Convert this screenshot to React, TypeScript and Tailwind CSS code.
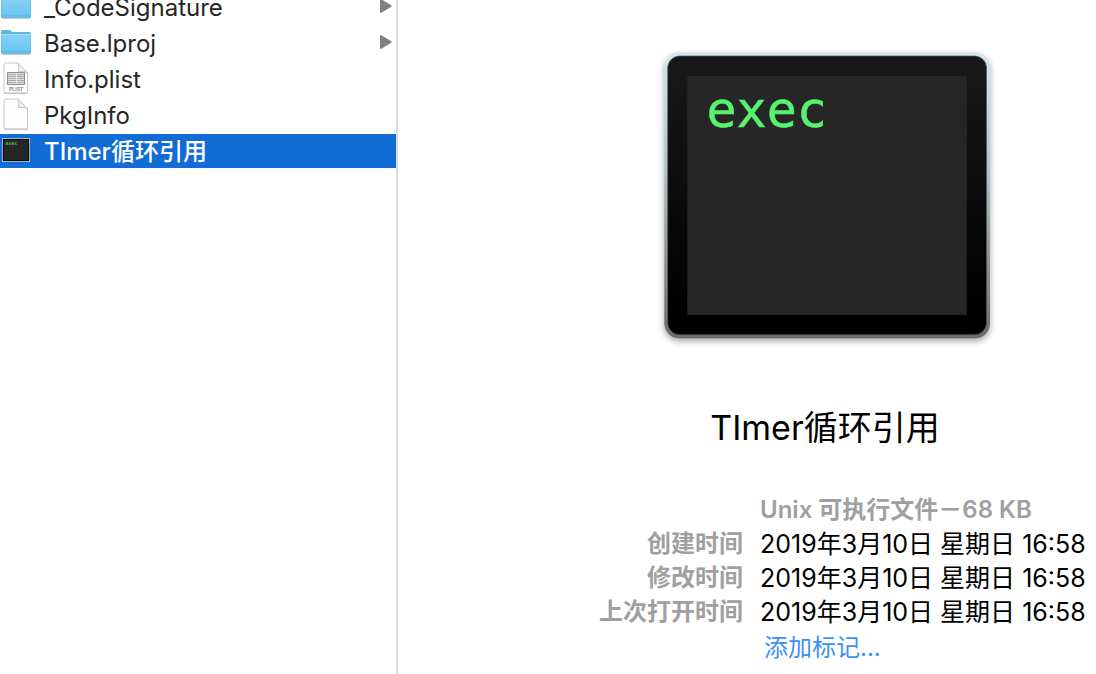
import React from "react";

type Kind = "folder" | "plist" | "document" | "exec";

interface Entry {
  name: string;
  kind: Kind;
  selected?: boolean;
}

const entries: Entry[] = [
  { name: "_CodeSignature", kind: "folder" },
  { name: "Base.lproj", kind: "folder" },
  { name: "Info.plist", kind: "plist" },
  { name: "PkgInfo", kind: "document" },
  { name: "TImer循环引用", kind: "exec", selected: true },
];

const details = [
  { label: "创建时间", value: "2019年3月10日 星期日 16:58" },
  { label: "修改时间", value: "2019年3月10日 星期日 16:58" },
  { label: "上次打开时间", value: "2019年3月10日 星期日 16:58" },
];

function FolderIcon() {
  return (
    <svg width="32" height="34" viewBox="0 0 32 34" aria-hidden="true">
      <defs>
        <linearGradient id="folder" x1="0" y1="0" x2="0" y2="1">
          <stop offset="0" stopColor="#84d3f8" />
          <stop offset="1" stopColor="#68c2ee" />
        </linearGradient>
      </defs>
      <path d="M2 28.5h28" stroke="#000" strokeOpacity=".2" />
      <path d="M1 27V6q0-2 2-2h6.500q1 0 1.800 1l.7 1H29q2 0 2 2v19q0 1-1 1H2q-1 0-1-1z" fill="#61b5dc" />
      <path d="M1.500 8.500h29V26.500q0 1-1 1h-27q-1 0-1-1z" fill="url(#folder)" />
      <path d="M1 8.500h30" stroke="#a3dff8" />
      <path d="M1.500 25.500h29" stroke="#5bb4e0" strokeWidth=".6" />
    </svg>
  );
}

function DocumentIcon({ plist = false }: { plist?: boolean }) {
  return (
    <svg width="32" height="34" viewBox="0 0 32 34" aria-hidden="true">
      <path d="M5 1h13l9.500 10v19q0 1-1 1H5q-1 0-1-1V2q0-1 1-1z" fill="#fefefe" stroke="#c8c8c8" strokeWidth="1" />
      <path d="M4 31.300h24" stroke="#aaa" strokeWidth=".7" />
      <path d="M18 1q1.500 3 .3 8.500Q24 8.500 27.500 11z" fill="#f0f0f0" stroke="#bdbdbd" strokeWidth=".8" />
      {plist && (
        <g>
          <path d="M7.500 10.500h17v12h-17z" fill="#e2e2e2" stroke="#8e8e8e" />
          <path d="M8 12.500h16M8 14.500h16M8 16.500h16M8 18.500h16M8 20.500h16" stroke="#a8a8a8" />
          <path d="M16.500 11v11" stroke="#ededed" />
          <text x="16" y="29" textAnchor="middle" className="fill-[#8a8a8a] font-['Liberation_Sans',sans-serif] text-[5px] font-bold">
            PLIST
          </text>
        </g>
      )}
    </svg>
  );
}

function SmallExecIcon() {
  return (
    <svg width="32" height="34" viewBox="0 0 32 34" aria-hidden="true">
      <path d="M2 4h28v24H2z" fill="#9fb2bf" />
      <path d="M3 5h26v22H3z" fill="#090909" />
      <path d="M4 6h24v20H4z" fill="#262626" />
      <text x="5.500" y="11" className="fill-[#3fbf55] font-['DejaVu_Sans_Mono',monospace] text-[5px] font-bold">
        exec
      </text>
    </svg>
  );
}

function LargeExecIcon() {
  return (
    <svg width="340" height="304" viewBox="655 44 340 304" role="img" aria-label="exec">
      <defs>
        <linearGradient id="rim" x1="0" y1="0" x2="0" y2="1">
          <stop offset="0" stopColor="#d3e8ef" />
          <stop offset=".4" stopColor="#b4c4ca" />
          <stop offset="1" stopColor="#6e6a6a" />
        </linearGradient>
        <linearGradient id="bezel" x1="0" y1="0" x2="0" y2="1">
          <stop offset="0" stopColor="#191919" />
          <stop offset=".9" stopColor="#000" />
        </linearGradient>
        <filter id="shade" x="-5%" y="-5%" width="110%" height="112%" colorInterpolationFilters="sRGB">
          <feDropShadow dx="0" dy="3" stdDeviation="3" floodOpacity=".35" />
        </filter>
      </defs>
      <rect x="664.3" y="52.3" width="325.700" height="286" rx="15" fill="url(#rim)" filter="url(#shade)" />
      <rect x="667.7" y="56" width="318.800" height="278.700" rx="12" fill="url(#bezel)" stroke="#525658" strokeWidth=".7" />
      <rect x="687.3" y="76" width="279.500" height="239" fill="#262626" />
      <text x="706.5" y="127" className="fill-[#56f36f] font-['DejaVu_Sans_Mono',monospace] text-[50px]" stroke="#56f36f" strokeWidth=".6">
        exec
      </text>
    </svg>
  );
}

function EntryIcon({ kind }: { kind: Kind }) {
  if (kind === "folder") return <FolderIcon />;
  if (kind === "exec") return <SmallExecIcon />;
  return <DocumentIcon plist={kind === "plist"} />;
}

function EntryRow({ entry }: { entry: Entry }) {
  const tone = entry.selected ? "bg-[#116cd6] font-medium text-white" : "text-[#262626]";
  return (
    <li>
      <button type="button" aria-pressed={!!entry.selected} className={`flex h-[34px] w-full items-center gap-3 pr-1 text-left ${tone}`}>
        <EntryIcon kind={entry.kind} />
        <span className="flex-1 pt-[2px] whitespace-nowrap">{entry.name}</span>
        {entry.kind === "folder" && (
          <svg width="12" height="16" viewBox="0 0 12 16" aria-hidden="true">
            <path d="M0 .8Q0 0 .9 0L11.300 6.300q.8.700 0 1.400L.9 14Q0 14 0 13.200z" fill="#808080" />
          </svg>
        )}
      </button>
    </li>
  );
}

export default function App() {
  return (
    <div className="flex h-screen overflow-hidden bg-white font-['Inter','Noto_Sans_CJK_SC',sans-serif] text-[24px] leading-[34px]">
      <nav className="w-[398px] shrink-0 overflow-hidden border-r-2 border-[#dddddd]">
        <ul className="-mt-[10px] flex flex-col gap-[2px]">
          {entries.map((entry) => (
            <EntryRow key={entry.name} entry={entry} />
          ))}
        </ul>
      </nav>
      <main className="flex min-w-0 flex-1 flex-col items-center pt-11 pl-[156px]">
        <LargeExecIcon />
        <h1 className="mt-14 text-[34px] leading-[48px] whitespace-nowrap text-black">TImer循环引用</h1>
        <div className="mt-[41px] grid w-full grid-cols-[189px_1fr] gap-x-[17px] whitespace-nowrap text-black">
          <p className="col-start-2 font-semibold text-[#a0a0a0]">Unix 可执行文件－68 KB</p>
          <dl className="contents">
            {details.map(({ label, value }) => (
              <React.Fragment key={label}>
                <dt className="flex justify-end font-semibold text-[#a0a0a0]">{label}</dt>
                <dd className="text-[25px]">{value}</dd>
              </React.Fragment>
            ))}
          </dl>
          <div className="col-start-2 pt-[2px] pl-1">
            <button type="button" className="text-[#3c8fff]">
              添加标记...
            </button>
          </div>
        </div>
      </main>
    </div>
  );
}
